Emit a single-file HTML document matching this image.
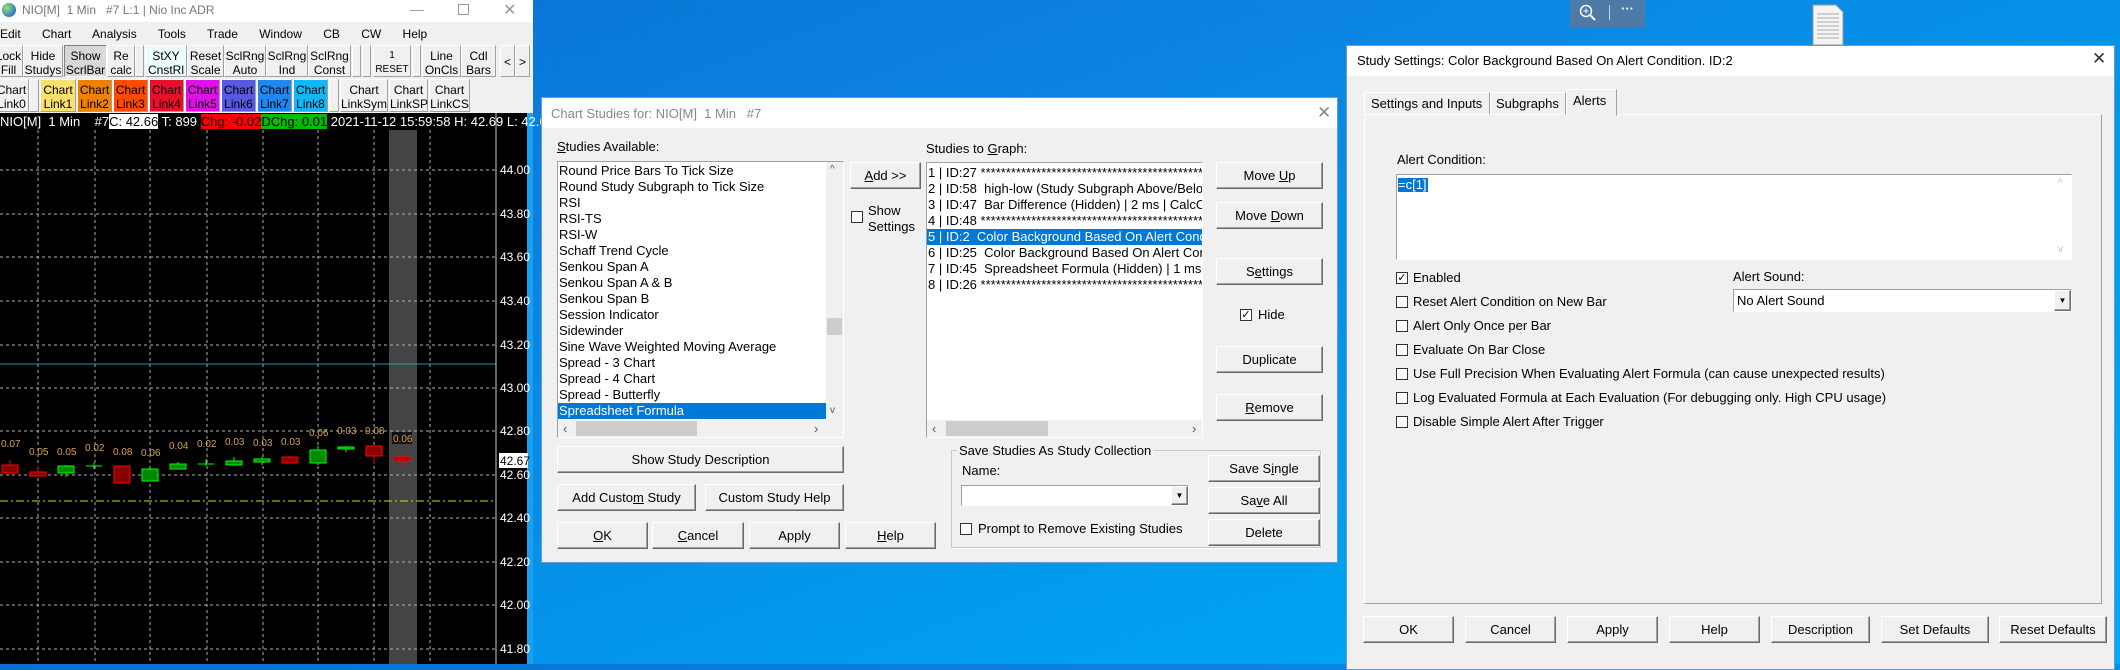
<!DOCTYPE html>
<html><head><meta charset="utf-8"><style>
*{box-sizing:border-box;margin:0;padding:0}
body{width:2120px;height:664px;overflow:hidden;position:relative;font-family:"Liberation Sans",sans-serif;font-size:13px;color:#000;
background:linear-gradient(160deg,#0a6fd0 0%,#0b84e2 35%,#00a0f0 75%,#04a8f4 100%);}
.a{position:absolute}
.tb{position:absolute;background:#f0f0f0;border:1px solid;border-color:#fff #a0a0a0 #a0a0a0 #fff;font-size:12px;line-height:14px;text-align:center;color:#000;padding-top:3px}
.btn{position:absolute;background:#f0f0f0;border:1px solid;border-color:#fff #696969 #696969 #fff;box-shadow:inset -1px -1px #a0a0a0;text-align:center;font-size:13px;display:flex;align-items:center;justify-content:center}
.cb{position:absolute;width:12px;height:12px;border:1px solid #333;background:#fff;font-size:11px;line-height:10px;text-align:center}
.lt{position:absolute;white-space:nowrap;font-size:13px}
.row{height:16px;line-height:16px;white-space:nowrap;padding-left:1px}
.sel{background:#0078d7;color:#fff}
.ax{fill:#fff;font-size:12px;font-family:"Liberation Sans",sans-serif}
.lb{fill:#d8a050;font-size:10px;font-family:"Liberation Sans",sans-serif}
</style></head><body>

<!-- Left chart window -->
<div class="a" style="left:0;top:0;width:533px;height:664px;background:#f0f0f0"></div>
<div class="a" style="left:0;top:0;width:533px;height:22px;background:#fff"></div>
<div class="a" style="left:2px;top:3px;width:14px;height:14px;border-radius:50%;background:radial-gradient(circle at 35% 35%,#9fe07a,#2a7bc0 70%)"></div>
<div class="lt" style="left:22px;top:3px;color:#777;font-size:12px">NIO[M]&nbsp; 1 Min&nbsp;&nbsp; #7 L:1 | Nio Inc ADR</div>
<div class="lt" style="left:410px;top:1px;color:#999;font-size:14px">—</div>
<div class="a" style="left:458px;top:4px;width:11px;height:11px;border:1px solid #999"></div>
<div class="lt" style="left:503px;top:0px;color:#999;font-size:16px">✕</div>
<div class="lt" style="left:0;top:27px;font-size:12px;word-spacing:2px">Edit&nbsp;&nbsp;&nbsp; Chart&nbsp;&nbsp;&nbsp; Analysis&nbsp;&nbsp;&nbsp; Tools&nbsp;&nbsp;&nbsp; Trade&nbsp;&nbsp;&nbsp; Window&nbsp;&nbsp;&nbsp; CB&nbsp;&nbsp;&nbsp; CW&nbsp;&nbsp;&nbsp; Help</div>

<div class="tb" style="left:-6px;top:45px;width:29px;height:32px">Lock<br>Fill</div>
<div class="tb" style="left:23px;top:45px;width:40px;height:32px">Hide<br>Studys</div>
<div class="tb" style="left:64px;top:45px;width:43px;height:32px;background:repeating-linear-gradient(45deg,#c8c8c8 0 1px,#e8e8e8 1px 2px);border-color:#808080 #fff #fff #808080">Show<br>ScrlBar</div>
<div class="tb" style="left:107px;top:45px;width:28px;height:32px">Re<br>calc</div>
<div class="tb" style="left:135px;top:45px;width:9px;height:32px"></div>
<div class="tb" style="left:145px;top:45px;width:42px;height:32px;background:#eafcfc">StXY<br>CnstRl</div>
<div class="tb" style="left:187px;top:45px;width:37px;height:32px">Reset<br>Scale</div>
<div class="tb" style="left:224px;top:45px;width:42px;height:32px">SclRng<br>Auto</div>
<div class="tb" style="left:266px;top:45px;width:42px;height:32px">SclRng<br>Ind</div>
<div class="tb" style="left:308px;top:45px;width:43px;height:32px">SclRng<br>Const</div>
<div class="tb" style="left:352px;top:45px;width:9px;height:32px"></div>
<div class="tb" style="left:362px;top:45px;width:9px;height:32px"></div>
<div class="tb" style="left:373px;top:45px;width:38px;height:32px;font-size:10px">1<br>RESET</div>
<div class="tb" style="left:412px;top:45px;width:9px;height:32px"></div>
<div class="tb" style="left:422px;top:45px;width:39px;height:32px">Line<br>OnCls</div>
<div class="tb" style="left:461px;top:45px;width:35px;height:32px">Cdl<br>Bars</div>
<div class="tb" style="left:500px;top:45px;width:15px;height:32px;padding-top:9px">&lt;</div>
<div class="tb" style="left:515px;top:45px;width:15px;height:32px;padding-top:9px">&gt;</div>

<div class="tb" style="left:-6px;top:79px;width:35px;height:33px">Chart<br>Link0</div>
<div class="tb" style="left:29px;top:79px;width:10px;height:33px"></div>
<div class="tb" style="left:40px;top:79px;width:36px;height:33px;background:repeating-linear-gradient(45deg,#ffd040 0 1px,#fff0a0 1px 2px)">Chart<br>Link1</div>
<div class="tb" style="left:77px;top:79px;width:35px;height:33px;background:#ef8000">Chart<br>Link2</div>
<div class="tb" style="left:113px;top:79px;width:35px;height:33px;background:#ff4a00">Chart<br>Link3</div>
<div class="tb" style="left:149px;top:79px;width:35px;height:33px;background:#e8102a">Chart<br>Link4</div>
<div class="tb" style="left:185px;top:79px;width:35px;height:33px;background:#e010e8">Chart<br>Link5</div>
<div class="tb" style="left:221px;top:79px;width:35px;height:33px;background:#5858e0">Chart<br>Link6</div>
<div class="tb" style="left:257px;top:79px;width:35px;height:33px;background:#1e88f0">Chart<br>Link7</div>
<div class="tb" style="left:293px;top:79px;width:35px;height:33px;background:#10b8f8">Chart<br>Link8</div>
<div class="tb" style="left:329px;top:79px;width:10px;height:33px"></div>
<div class="tb" style="left:340px;top:79px;width:48px;height:33px">Chart<br>LinkSym</div>
<div class="tb" style="left:389px;top:79px;width:39px;height:33px">Chart<br>LinkSP</div>
<div class="tb" style="left:429px;top:79px;width:41px;height:33px">Chart<br>LinkCS</div>

<svg class="a" style="left:0;top:0" width="533" height="664" viewBox="0 0 533 664">
<rect x="0" y="113" width="533" height="551" fill="#000"/>
<rect x="389" y="130" width="28" height="534" fill="#444"/>
<g stroke="#b0b0b0" stroke-dasharray="3,3" stroke-width="1">
<line x1="38" y1="130" x2="38" y2="664"/><line x1="95" y1="130" x2="95" y2="664"/><line x1="150" y1="130" x2="150" y2="664"/><line x1="207" y1="130" x2="207" y2="664"/><line x1="263" y1="130" x2="263" y2="664"/><line x1="318" y1="130" x2="318" y2="664"/><line x1="374" y1="130" x2="374" y2="664"/><line x1="430" y1="130" x2="430" y2="664"/>
<line x1="0" y1="170" x2="496" y2="170"/><line x1="0" y1="214" x2="496" y2="214"/><line x1="0" y1="257" x2="496" y2="257"/><line x1="0" y1="301" x2="496" y2="301"/><line x1="0" y1="345" x2="496" y2="345"/><line x1="0" y1="388" x2="496" y2="388"/><line x1="0" y1="431" x2="496" y2="431"/><line x1="0" y1="475" x2="496" y2="475"/><line x1="0" y1="518" x2="496" y2="518"/><line x1="0" y1="562" x2="496" y2="562"/><line x1="0" y1="605" x2="496" y2="605"/><line x1="0" y1="649" x2="496" y2="649"/>
</g>
<line x1="0" y1="364" x2="496" y2="364" stroke="#2a9a9a"/>
<line x1="0" y1="501" x2="496" y2="501" stroke="#d8d800" stroke-dasharray="8,3,2,3"/>
<line x1="496" y1="113" x2="496" y2="664" stroke="#ccc"/>
<rect x="527" y="113" width="6" height="551" fill="#1aa0f0"/>
<g class="ax">
<text x="500" y="174">44.00</text><text x="500" y="218">43.80</text><text x="500" y="261">43.60</text><text x="500" y="305">43.40</text><text x="500" y="349">43.20</text><text x="500" y="392">43.00</text><text x="500" y="435">42.80</text><text x="500" y="479">42.60</text><text x="500" y="522">42.40</text><text x="500" y="566">42.20</text><text x="500" y="609">42.00</text><text x="500" y="653">41.80</text>
</g>
<rect x="499" y="453" width="29" height="15" fill="#fff"/><text x="500" y="465" style="font-size:12px;font-family:'Liberation Sans'">42.67</text>
<g stroke-width="1">
<line x1="10" y1="460" x2="10" y2="475" stroke="#f00"/><rect x="2" y="465" width="16" height="8" fill="#800" stroke="#f00"/>
<line x1="38" y1="466" x2="38" y2="475" stroke="#f00"/><rect x="30" y="472" width="16" height="4" fill="#800" stroke="#f00"/>
<line x1="66" y1="465" x2="66" y2="477" stroke="#0f0"/><rect x="58" y="466" width="16" height="7" fill="#080" stroke="#0f0"/>
<line x1="94" y1="463" x2="94" y2="469" stroke="#0f0"/><line x1="86" y1="466" x2="102" y2="466" stroke="#0f0"/>
<rect x="114" y="466" width="16" height="17" fill="#800" stroke="#f00"/>
<rect x="142" y="469" width="16" height="12" fill="#080" stroke="#0f0"/>
<line x1="178" y1="462" x2="178" y2="469" stroke="#0f0"/><rect x="170" y="464" width="16" height="5" fill="#080" stroke="#0f0"/>
<line x1="206" y1="459" x2="206" y2="466" stroke="#0f0"/><line x1="198" y1="464" x2="214" y2="464" stroke="#0f0"/>
<line x1="234" y1="457" x2="234" y2="465" stroke="#0f0"/><rect x="226" y="461" width="16" height="4" fill="#080" stroke="#0f0"/>
<line x1="262" y1="457" x2="262" y2="465" stroke="#0f0"/><rect x="254" y="459" width="16" height="3" fill="#080" stroke="#0f0"/>
<line x1="290" y1="456" x2="290" y2="463" stroke="#f00"/><rect x="282" y="457" width="16" height="6" fill="#800" stroke="#f00"/>
<line x1="318" y1="446" x2="318" y2="465" stroke="#0f0"/><rect x="310" y="450" width="16" height="13" fill="#080" stroke="#0f0"/>
<line x1="346" y1="446" x2="346" y2="452" stroke="#0f0"/><rect x="338" y="447" width="16" height="2" fill="#080" stroke="#0f0"/>
<line x1="374" y1="446" x2="374" y2="464" stroke="#f00"/><rect x="366" y="446" width="16" height="10" fill="#800" stroke="#f00"/>
<line x1="402" y1="455" x2="402" y2="467" stroke="#f00"/><rect x="394" y="457" width="16" height="4" fill="#a00" stroke="#f00"/>
</g>
<rect x="392" y="432" width="20" height="12" fill="#111"/>
<g class="lb">
<text x="1" y="447">0.07</text><text x="29" y="455">0.05</text><text x="57" y="455">0.05</text><text x="85" y="451">0.02</text><text x="113" y="455">0.08</text><text x="141" y="456">0.06</text><text x="169" y="449">0.04</text><text x="197" y="447">0.02</text><text x="225" y="445">0.03</text><text x="253" y="446">0.03</text><text x="281" y="445">0.03</text><text x="309" y="436">0.06</text><text x="337" y="434">0.03</text><text x="365" y="434">0.08</text><text x="393" y="442">0.06</text>
</g>
</svg>
<div class="lt" style="left:0;top:113px;height:17px;line-height:17px;color:#fff;font-size:13px">NIO[M]&nbsp; 1 Min&nbsp;&nbsp;&nbsp; #7<span style="background:#fff;color:#000">C: 42.66</span> T: 899 <span style="background:#f00;color:#000">Chg: -0.02</span><span style="background:#0b0;color:#000">DChg: 0.01</span> 2021-11-12 15:59:58 H: 42.69 L: 42.63 O</div>

<!-- Chart Studies dialog -->
<div class="a" style="left:541px;top:97px;width:797px;height:466px;background:#f0f0f0;border:1px solid #6a9ad0"></div>
<div class="a" style="left:542px;top:98px;width:795px;height:30px;background:#fff"></div>
<div class="lt" style="left:551px;top:106px;color:#888">Chart Studies for: NIO[M]&nbsp; 1 Min&nbsp;&nbsp; #7</div>
<div class="lt" style="left:1317px;top:103px;color:#888;font-size:17px">✕</div>
<div class="lt" style="left:557px;top:139px"><u>S</u>tudies Available:</div>
<div class="a" style="left:557px;top:161px;width:287px;height:277px;background:#fff;border:1px solid;border-color:#a0a0a0 #fff #fff #a0a0a0;padding-top:1px">
<div class="row">Round Price Bars To Tick Size</div><div class="row">Round Study Subgraph to Tick Size</div><div class="row">RSI</div><div class="row">RSI-TS</div><div class="row">RSI-W</div><div class="row">Schaff Trend Cycle</div><div class="row">Senkou Span A</div><div class="row">Senkou Span A &amp; B</div><div class="row">Senkou Span B</div><div class="row">Session Indicator</div><div class="row">Sidewinder</div><div class="row">Sine Wave Weighted Moving Average</div><div class="row">Spread - 3 Chart</div><div class="row">Spread - 4 Chart</div><div class="row">Spread - Butterfly</div><div class="row sel" style="width:268px">Spreadsheet Formula</div>
</div>
<div class="a" style="left:826px;top:162px;width:17px;height:258px;background:#f0f0f0"></div>
<div class="a" style="left:827px;top:318px;width:15px;height:17px;background:#cdcdcd"></div>
<div class="lt" style="left:830px;top:164px;font-size:10px;color:#555">^</div>
<div class="lt" style="left:830px;top:405px;font-size:10px;color:#555">v</div>
<div class="a" style="left:558px;top:420px;width:285px;height:17px;background:#f0f0f0"></div>
<div class="a" style="left:576px;top:421px;width:121px;height:15px;background:#cdcdcd"></div>
<div class="lt" style="left:563px;top:421px;color:#555">‹</div><div class="lt" style="left:814px;top:421px;color:#555">›</div>

<div class="btn" style="left:850px;top:162px;width:71px;height:27px"><span><u>A</u>dd &gt;&gt;</span></div>
<div class="cb" style="left:851px;top:211px"></div>
<div class="lt" style="left:868px;top:203px;line-height:16px">Show<br>Settings</div>

<div class="lt" style="left:926px;top:141px">Studies to <u>G</u>raph:</div>
<div class="a" style="left:926px;top:162px;width:277px;height:276px;background:#fff;border:1px solid;border-color:#a0a0a0 #fff #fff #a0a0a0;padding-top:2px;overflow:hidden">
<div class="row">1 | ID:27 ****************************************************</div>
<div class="row">2 | ID:58&nbsp; high-low (Study Subgraph Above/Below)</div>
<div class="row">3 | ID:47&nbsp; Bar Difference (Hidden) | 2 ms | CalcOnce</div>
<div class="row">4 | ID:48 ****************************************************</div>
<div class="row sel">5 | ID:2&nbsp; Color Background Based On Alert Condition</div>
<div class="row">6 | ID:25&nbsp; Color Background Based On Alert Condition</div>
<div class="row">7 | ID:45&nbsp; Spreadsheet Formula (Hidden) | 1 ms</div>
<div class="row">8 | ID:26 ****************************************************</div>
</div>
<div class="a" style="left:927px;top:420px;width:275px;height:17px;background:#f0f0f0"></div>
<div class="a" style="left:946px;top:421px;width:102px;height:15px;background:#cdcdcd"></div>
<div class="lt" style="left:932px;top:421px;color:#555">‹</div><div class="lt" style="left:1192px;top:421px;color:#555">›</div>

<div class="btn" style="left:1216px;top:162px;width:107px;height:27px"><span>Move <u>U</u>p</span></div>
<div class="btn" style="left:1216px;top:202px;width:107px;height:27px"><span>Move <u>D</u>own</span></div>
<div class="btn" style="left:1216px;top:258px;width:107px;height:27px"><span>S<u>e</u>ttings</span></div>
<div class="cb" style="left:1240px;top:309px">✓</div><div class="lt" style="left:1258px;top:307px">Hide</div>
<div class="btn" style="left:1216px;top:346px;width:107px;height:27px">Duplicate</div>
<div class="btn" style="left:1216px;top:394px;width:107px;height:27px"><span><u>R</u>emove</span></div>

<div class="btn" style="left:557px;top:446px;width:287px;height:27px">Show Study Description</div>
<div class="btn" style="left:557px;top:484px;width:139px;height:27px"><span>Add Custo<u>m</u> Study</span></div>
<div class="btn" style="left:705px;top:484px;width:139px;height:27px">Custom Study Help</div>
<div class="btn" style="left:557px;top:522px;width:91px;height:27px"><u>O</u>K</div>
<div class="btn" style="left:652px;top:522px;width:92px;height:27px"><span><u>C</u>ancel</span></div>
<div class="btn" style="left:749px;top:522px;width:91px;height:27px">Apply</div>
<div class="btn" style="left:845px;top:522px;width:91px;height:27px"><span><u>H</u>elp</span></div>

<div class="a" style="left:951px;top:450px;width:370px;height:98px;border:1px solid #c8c8c8;box-shadow:1px 1px #fff"></div>
<div class="lt" style="left:957px;top:443px;background:#f0f0f0;padding:0 2px">Save Studies As Study Collection</div>
<div class="lt" style="left:962px;top:463px">Name:</div>
<div class="a" style="left:961px;top:485px;width:228px;height:21px;background:#fff;border:1px solid;border-color:#a0a0a0 #fff #fff #a0a0a0"></div>
<div class="btn" style="left:1171px;top:486px;width:17px;height:19px;font-size:8px">▼</div>
<div class="cb" style="left:960px;top:523px"></div><div class="lt" style="left:978px;top:521px">Prompt to Remove Existing Studies</div>
<div class="btn" style="left:1208px;top:455px;width:112px;height:27px"><span>Save S<u>i</u>ngle</span></div>
<div class="btn" style="left:1208px;top:487px;width:112px;height:27px"><span>Sa<u>v</u>e All</span></div>
<div class="btn" style="left:1208px;top:519px;width:112px;height:27px">Delete</div>

<!-- top overlay -->
<div class="a" style="left:1570px;top:0;width:75px;height:27px;background:#4d7aa6"></div>
<svg class="a" style="left:1578px;top:3px" width="20" height="20"><circle cx="8" cy="8" r="5.5" fill="none" stroke="#fff" stroke-width="1.5"/><line x1="12" y1="12" x2="17" y2="17" stroke="#fff" stroke-width="2"/><line x1="5.5" y1="8" x2="10.5" y2="8" stroke="#fff"/><line x1="8" y1="5.5" x2="8" y2="10.5" stroke="#fff"/></svg>
<div class="a" style="left:1609px;top:5px;width:1px;height:15px;background:#ccd"></div>
<div class="lt" style="left:1621px;top:1px;color:#fff;font-weight:bold">···</div>
<svg class="a" style="left:1812px;top:4px" width="32" height="42"><path d="M1 1H24L31 8V41H1Z" fill="#f4f4f4" stroke="#999"/><g stroke="#aaa"><line x1="5" y1="10" x2="27" y2="10"/><line x1="5" y1="14" x2="27" y2="14"/><line x1="5" y1="18" x2="27" y2="18"/><line x1="5" y1="22" x2="27" y2="22"/><line x1="5" y1="26" x2="27" y2="26"/><line x1="5" y1="30" x2="27" y2="30"/><line x1="5" y1="34" x2="27" y2="34"/></g></svg>

<!-- Study Settings dialog -->
<div class="a" style="left:1346px;top:45px;width:769px;height:625px;background:#f0f0f0;border:1px solid #6a9ad0"></div>
<div class="a" style="left:1347px;top:46px;width:767px;height:30px;background:#fff"></div>
<div class="lt" style="left:1357px;top:53px">Study Settings: Color Background Based On Alert Condition. ID:2</div>
<div class="lt" style="left:2092px;top:49px;font-size:17px;color:#333">✕</div>
<div class="a" style="left:1364px;top:114px;width:738px;height:490px;border:1px solid;border-color:#fff #a0a0a0 #a0a0a0 #fff"></div>
<div class="a" style="left:1364px;top:92px;width:126px;height:23px;border:1px solid;border-color:#fff #a0a0a0 transparent #fff"></div>
<div class="lt" style="left:1371px;top:96px">Settings and Inputs</div>
<div class="a" style="left:1490px;top:92px;width:76px;height:23px;border:1px solid;border-color:#fff #a0a0a0 transparent #fff"></div>
<div class="lt" style="left:1496px;top:96px">Subgraphs</div>
<div class="a" style="left:1566px;top:89px;width:51px;height:27px;background:#f0f0f0;border:1px solid;border-color:#fff #a0a0a0 transparent #fff"></div>
<div class="lt" style="left:1573px;top:93px">Alerts</div>
<div class="lt" style="left:1397px;top:152px">Alert Condition:</div>
<div class="a" style="left:1396px;top:174px;width:676px;height:86px;background:#fff;border:1px solid;border-color:#a0a0a0 #fff #fff #a0a0a0"></div>
<div class="lt" style="left:1398px;top:178px;background:#0078d7;color:#fff;line-height:14px;padding-right:1px">=c[1]</div>
<div class="lt" style="left:2058px;top:178px;color:#bbb;font-size:10px">^</div>
<div class="lt" style="left:2058px;top:244px;color:#bbb;font-size:10px">v</div>

<div class="cb" style="left:1396px;top:272px">✓</div><div class="lt" style="left:1413px;top:270px">Enabled</div>
<div class="cb" style="left:1396px;top:296px"></div><div class="lt" style="left:1413px;top:294px">Reset Alert Condition on New Bar</div>
<div class="cb" style="left:1396px;top:320px"></div><div class="lt" style="left:1413px;top:318px">Alert Only Once per Bar</div>
<div class="cb" style="left:1396px;top:344px"></div><div class="lt" style="left:1413px;top:342px">Evaluate On Bar Close</div>
<div class="cb" style="left:1396px;top:368px"></div><div class="lt" style="left:1413px;top:366px">Use Full Precision When Evaluating Alert Formula (can cause unexpected results)</div>
<div class="cb" style="left:1396px;top:392px"></div><div class="lt" style="left:1413px;top:390px">Log Evaluated Formula at Each Evaluation (For debugging only. High CPU usage)</div>
<div class="cb" style="left:1396px;top:416px"></div><div class="lt" style="left:1413px;top:414px">Disable Simple Alert After Trigger</div>
<div class="lt" style="left:1733px;top:269px">Alert Sound:</div>
<div class="a" style="left:1733px;top:289px;width:339px;height:23px;background:#fff;border:1px solid;border-color:#a0a0a0 #fff #fff #a0a0a0"></div>
<div class="lt" style="left:1737px;top:293px">No Alert Sound</div>
<div class="btn" style="left:2054px;top:290px;width:17px;height:21px;font-size:8px">▼</div>

<div class="btn" style="left:1363px;top:616px;width:91px;height:27px">OK</div>
<div class="btn" style="left:1465px;top:616px;width:91px;height:27px">Cancel</div>
<div class="btn" style="left:1567px;top:616px;width:91px;height:27px">Apply</div>
<div class="btn" style="left:1669px;top:616px;width:91px;height:27px">Help</div>
<div class="btn" style="left:1771px;top:616px;width:99px;height:27px">Description</div>
<div class="btn" style="left:1881px;top:616px;width:108px;height:27px">Set Defaults</div>
<div class="btn" style="left:1999px;top:616px;width:108px;height:27px">Reset Defaults</div>
</body></html>
